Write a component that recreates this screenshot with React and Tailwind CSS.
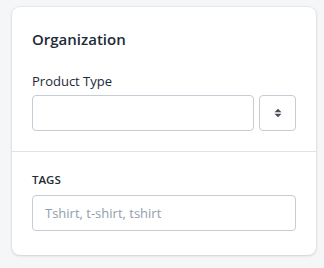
import React from 'react';

const SortIcon = () => (
  <svg width="10" height="12" viewBox="0 0 10 12" fill="#454f5b">
    <path d="M5 1.8 L8.5 5.3 H1.5 Z" />
    <path d="M5 10.2 L1.5 6.7 H8.5 Z" />
  </svg>
);

export default function App() {
  return (
    <div
      className="min-h-screen bg-[#f4f6f8] pt-[7px] px-[12px]"
      style={{ fontFamily: '"Open Sans", "Noto Sans", sans-serif' }}
    >
      <div className="w-[304px] bg-white rounded-[8px] shadow-[0_0_0_1px_rgba(63,63,68,0.05),0_1px_3px_0_rgba(63,63,68,0.15)] text-[#212b36]">
        <div className="px-5 pt-[20px] pb-[20px] border-b border-[#dfe3e8]">
          <h2 className="text-[15px] font-semibold leading-[24px]">Organization</h2>
          <label className="block mt-[20px] text-[13px] leading-[20px]">Product Type</label>
          <div className="flex gap-[5px] mt-[4px]">
            <input
              type="text"
              className="flex-1 min-w-0 h-[36px] border border-[#c4cdd5] rounded-[4px] px-3 outline-none"
            />
            <button className="w-[37px] h-[36px] border border-[#c4cdd5] rounded-[4px] flex items-center justify-center bg-white">
              <SortIcon />
            </button>
          </div>
        </div>
        <div className="px-5 pt-[18px] pb-[24px]">
          <label className="block text-[11.5px] font-semibold leading-[20px] uppercase">Tags</label>
          <input
            type="text"
            placeholder="Tshirt, t-shirt, tshirt"
            className="block w-full mt-[5px] h-[36px] border border-[#c4cdd5] rounded-[4px] px-3 text-[13px] outline-none placeholder:text-[#919eab]"
          />
        </div>
      </div>
    </div>
  );
}
